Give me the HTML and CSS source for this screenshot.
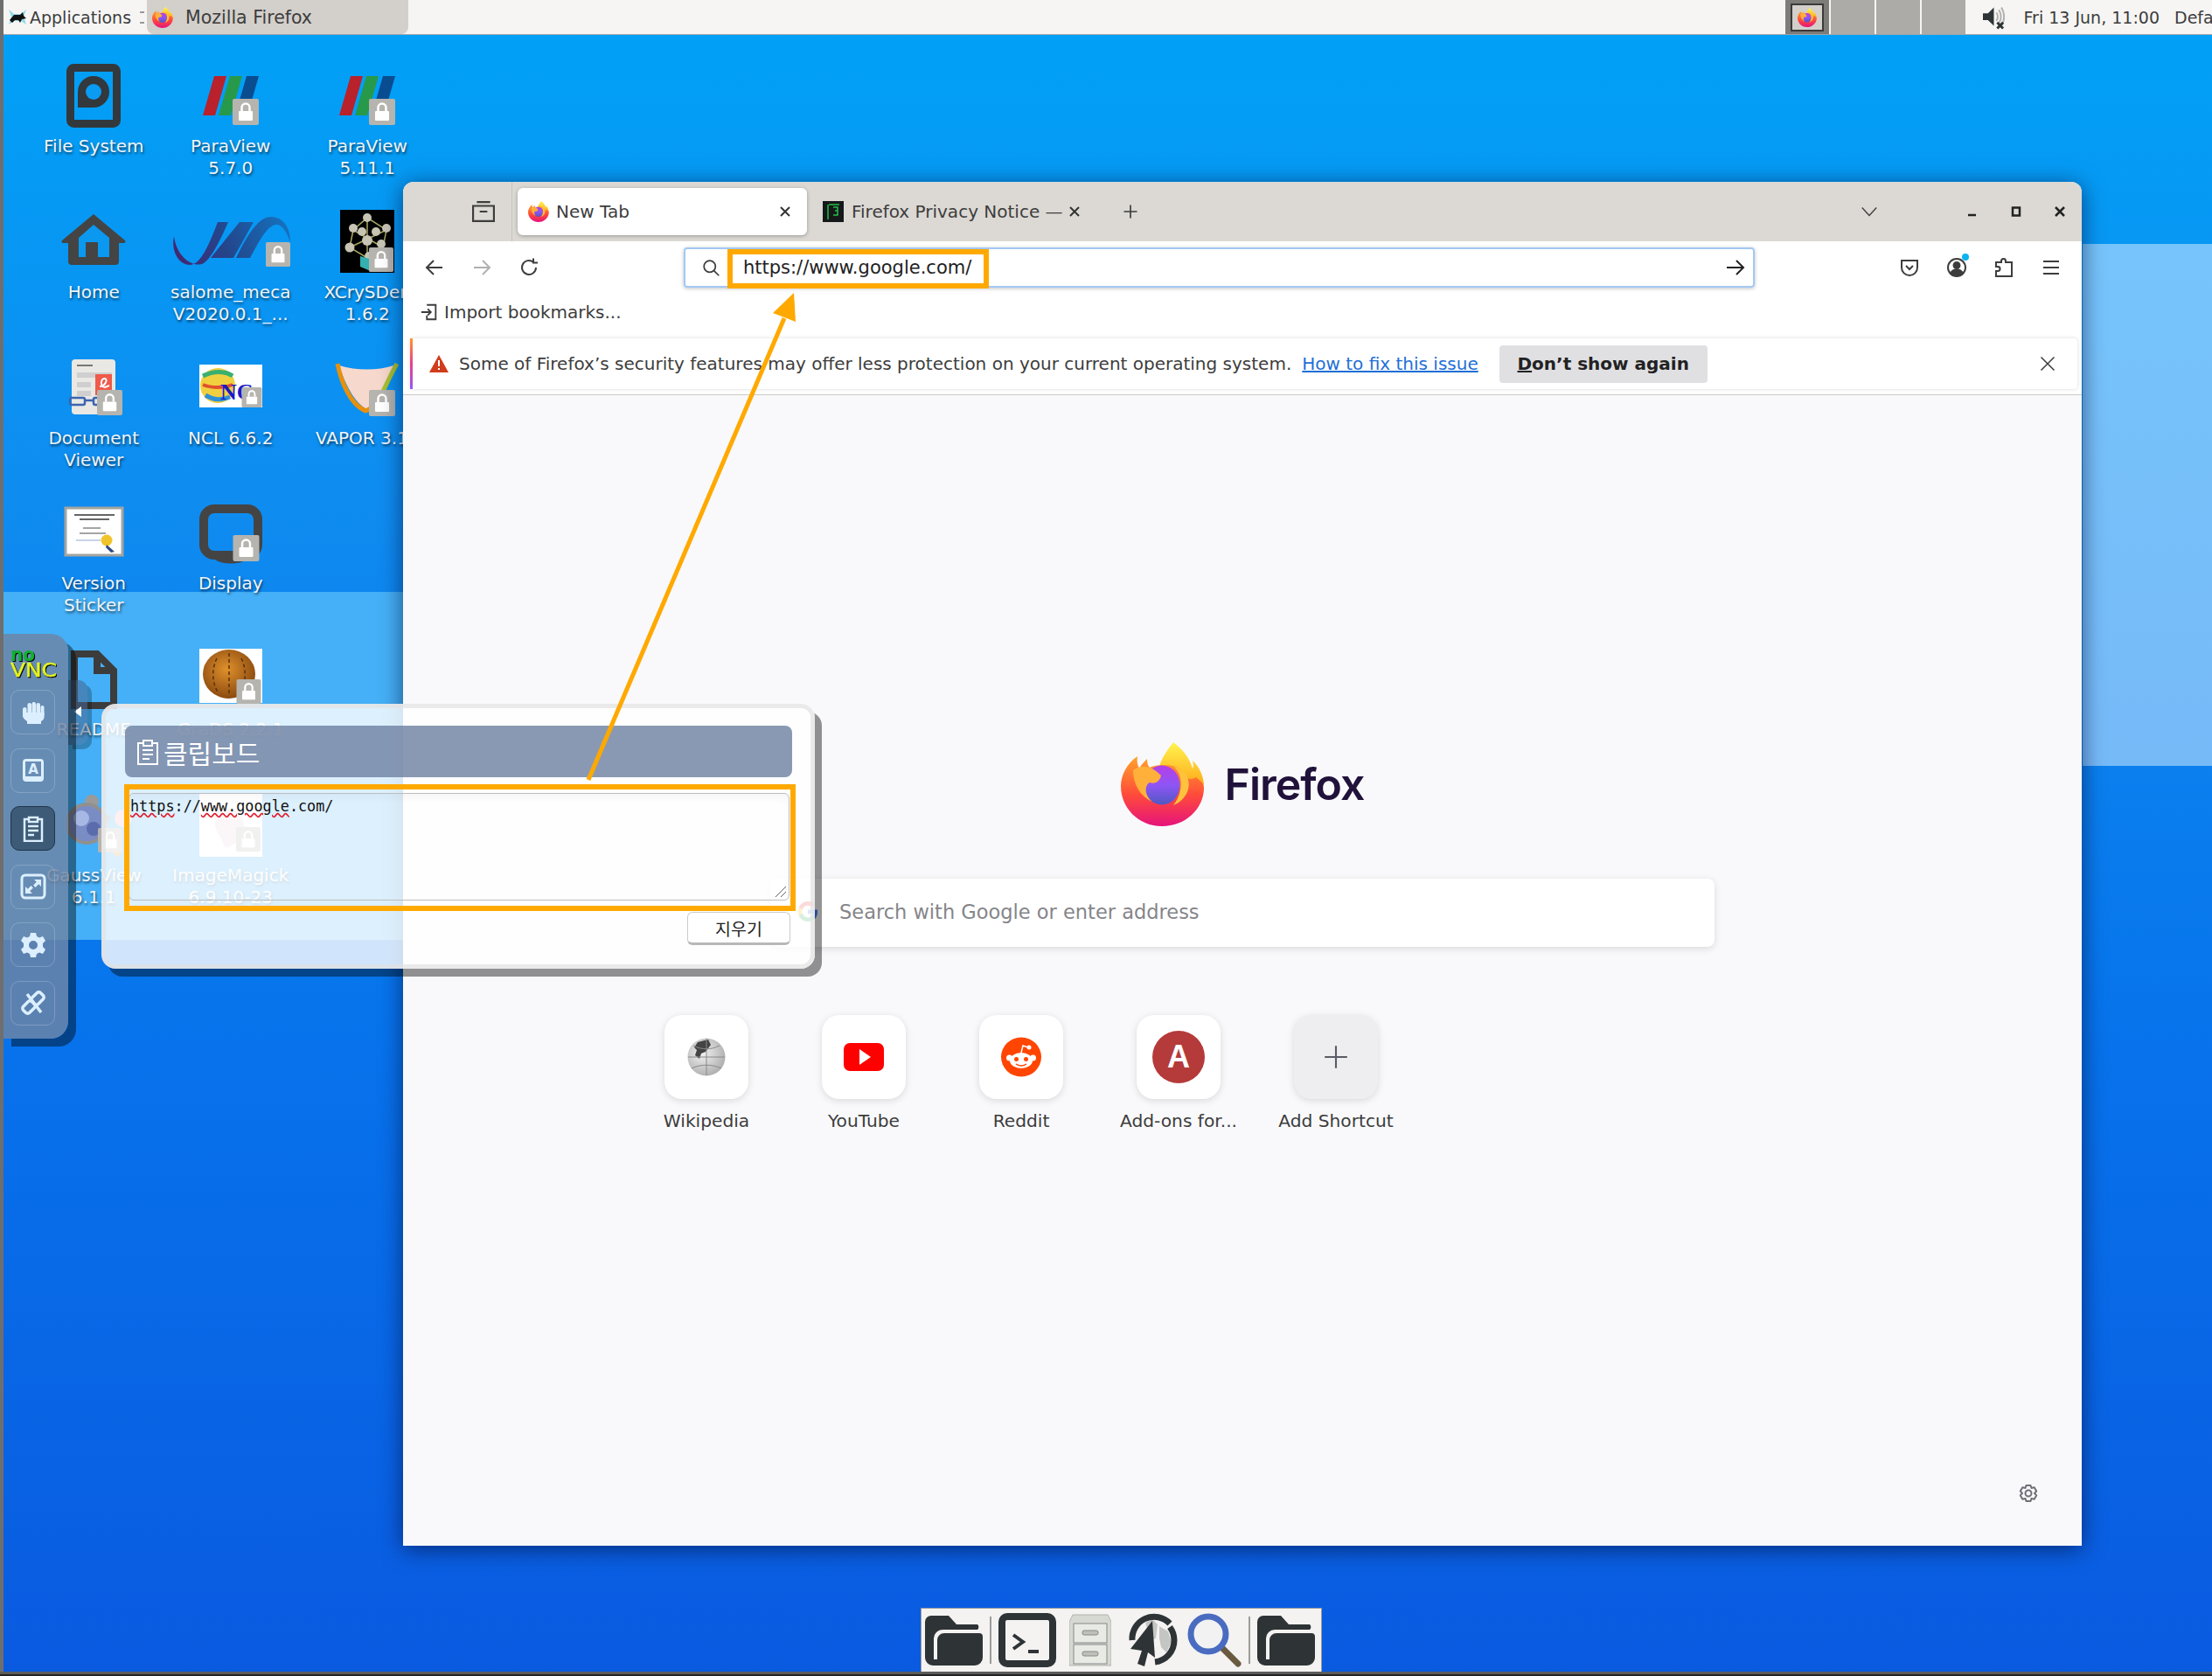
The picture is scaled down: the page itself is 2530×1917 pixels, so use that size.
FILE: index.html

```html
<!DOCTYPE html>
<html lang="en">
<head>
    <meta charset="UTF-8">
    <title>Mozilla Firefox</title>
    <link rel="stylesheet" href="styles.css">
</head>
<body>
<svg class="defs" width="0" height="0">
    <defs>
        <linearGradient id="ffBody" x1="0" y1="0" x2="0" y2="1">
            <stop offset="0" stop-color="#ffa52a"/><stop offset=".55" stop-color="#ff4b3a"/><stop offset="1" stop-color="#e5137c"/>
        </linearGradient>
        <linearGradient id="ffFlame" x1="0" y1="0" x2="0" y2="1">
            <stop offset="0" stop-color="#fff44f"/><stop offset="1" stop-color="#ff980e"/>
        </linearGradient>
        <linearGradient id="ffGlobe" x1="0" y1="0" x2="0" y2="1">
            <stop offset="0" stop-color="#b53ee6"/><stop offset=".5" stop-color="#8f55f5"/><stop offset="1" stop-color="#4f58c4"/>
        </linearGradient>
        <linearGradient id="salomeGrad" gradientUnits="userSpaceOnUse" x1="13" y1="70" x2="146" y2="20">
            <stop offset="0" stop-color="#46246e"/><stop offset=".45" stop-color="#23468c"/><stop offset="1" stop-color="#1474c0"/>
        </linearGradient>
        <radialGradient id="coinGrad" cx=".45" cy=".4" r=".6">
            <stop offset="0" stop-color="#e0912c"/><stop offset="1" stop-color="#8a4a10"/>
        </radialGradient>
        <radialGradient id="wikiGrad" cx=".4" cy=".4" r=".7">
            <stop offset="0" stop-color="#f2f2f2"/><stop offset="1" stop-color="#a8a8a8"/>
        </radialGradient>
        <symbol id="firefox" viewBox="0 0 96 96">
            <path fill="url(#ffFlame)" d="M60 0C52 10 44 22 44 30 55 27 70 33 76 50 82 60 86 62 88 60 92 56 94 50 95 48 94 38 90 28 82 21 83 26 83 28 82 30 78 16 70 8 60 0Z"/>
            <path fill="url(#ffBody)" d="M47 96C20 96 0 75 0 50 0 38 7 24 19 16 18 22 19 26 21 30 24 25 27 22 30 19 30 24 31 27 33 29 40 25 60 25 66 30 72 38 76 46 86 40 90 44 95 46 95 52 95 76 74 96 47 96Z"/>
            <ellipse cx="47" cy="49" rx="20.5" ry="22.5" fill="url(#ffGlobe)"/>
            <path fill="#ffb03a" d="M14 32C26 24 36 28 46 38 44 46 38 48 33 46 26 50 28 62 36 68 22 62 14 48 14 32Z"/>
            <path fill="#ffc23e" d="M60 28C70 34 73 56 60 72 72 68 84 52 74 36 70 32 66 29 60 28Z"/>
        </symbol>
        <symbol id="lock" viewBox="0 0 30 30">
            <rect width="30" height="30" rx="2" fill="#b6b4af"/>
            <rect x="7" y="14" width="16" height="11" rx="1" fill="#fff"/>
            <path d="M10.5 14V10a4.5 4.5 0 0 1 9 0v4" fill="none" stroke="#fff" stroke-width="2.5"/>
        </symbol>
        <symbol id="paraview" viewBox="0 0 64 45">
            <path fill="#b9212b" d="M0 45h14L27 0H13Z"/>
            <path fill="#27994a" d="M18 45h14L45 0H31Z"/>
            <path fill="#0a4c90" d="M37 45h14L64 0H50Z"/>
        </symbol>
        <symbol id="folder" viewBox="0 0 66 58">
            <path fill="#2e3436" d="M0 8a7 7 0 0 1 7-7h20l9 10h24a4 4 0 0 1 0 6H20a10 10 0 0 0-10 10v24h4V29a8 8 0 0 1 8-8h40a4 4 0 0 1 4 4v24a9 9 0 0 1-9 9H9a9 9 0 0 1-9-9Z"/>
        </symbol>
    </defs>
</svg>

<div class="screen">
    <div class="band band-left"></div>
    <div class="band band-right"></div>

    <header class="top-panel">
        <svg class="app-mouse" viewBox="0 0 24 24"><path fill="#8fd8e8" d="M2 3l6 5h8l6-5-3 8 3 9-6-4H8l-6 4 3-9Z"/><path fill="#111" d="M3 15l5-6h7l3-3 1 4 3 3-5 1-2 4-2-3H9l-3 3Z"/></svg>
        <span class="apps-label">Applications</span>
        <span class="grip"></span>
        <div class="task-btn">
            <svg class="task-icon"><use href="#firefox"/></svg>
            <span>Mozilla Firefox</span>
        </div>
        <div class="panel-spacer"></div>
        <div class="pager">
            <div class="ws ws-active"><svg class="ws-icon"><use href="#firefox"/></svg></div>
            <div class="ws"></div>
            <div class="ws"></div>
            <div class="ws"></div>
        </div>
        <svg class="vol-icon" viewBox="0 0 26 28">
            <path fill="#2e3436" d="M0 9h6l7-7v22l-7-7H0Z"/>
            <path fill="none" stroke="#b0b0b0" stroke-width="2" d="M16 8c2 3 2 7 0 10M19 5c3 5 3 11 0 16M22 2c4 7 4 15 0 22"/>
            <path stroke="#2e3436" stroke-width="3" d="M17 20l7 7M24 20l-7 7"/>
        </svg>
        <span class="clock">Fri 13 Jun, 11:00</span>
        <span class="session">Default</span>
    </header>

    <main class="desk-grid">
        <div class="desk-item">
            <svg class="desk-icon" viewBox="0 0 156 86"><rect x="51.5" y="11.5" width="53" height="64" rx="4" fill="none" stroke="#33383c" stroke-width="9"/><path fill="#33383c" d="M60 57V39a18 18 0 1 1 18 18Z"/><circle cx="78" cy="39" r="9" fill="#0a9bf2"/></svg>
            <span class="desk-label">File System</span>
        </div>
        <div class="desk-item">
            <svg class="desk-icon" viewBox="0 0 156 86"><path fill="#444" d="M78 12l36 30a2 2 0 0 1-1 3h-6v21a4 4 0 0 1-4 4H53a4 4 0 0 1-4-4V45h-6a2 2 0 0 1-1-3Z"/><path fill="#0a98f0" d="M78 24l18 15v22H61V39Z"/><rect x="69" y="44" width="14" height="20" fill="#444"/></svg>
            <span class="desk-label">Home</span>
        </div>
        <div class="desk-item">
            <svg class="desk-icon" viewBox="0 0 156 86"><rect x="53" y="11" width="50" height="63" rx="4" fill="#e9e8e4"/><path stroke="#777" stroke-width="2" d="M59 18h18"/><path stroke="#cfcfcf" stroke-width="6" d="M59 29h40M59 40h16M59 50h16"/><rect x="80" y="28" width="19" height="24" fill="#ef5a4a"/><path fill="none" stroke="#fff" stroke-width="2" d="M85 42c6 0 10-8 6-9-5-1-6 10 0 10l5-2"/><g fill="none" stroke="#3d64b0" stroke-width="2.5"><rect x="51" y="55" width="17" height="8" rx="2"/><rect x="78" y="55" width="17" height="8" rx="2"/><path d="M68 58h10"/></g><use href="#lock" x="82" y="46" width="29" height="29"/></svg>
            <span class="desk-label">Document<br>Viewer</span>
        </div>
        <div class="desk-item">
            <svg class="desk-icon" viewBox="0 0 156 86"><rect x="46" y="15" width="65" height="54" fill="#fff" stroke="#a5a5a0" stroke-width="3"/><path stroke="#666" stroke-width="2" d="M56 23h46M62 28h34"/><path stroke="#888" stroke-width="1.5" d="M66 38h20M62 44h30"/><path stroke="#8fa8d0" stroke-width="1" d="M58 52h28"/><circle cx="93" cy="52" r="6.5" fill="#f0c52c"/><path fill="#2e4a80" d="M93 57l9 8-4 1-6-6Z"/></svg>
            <span class="desk-label">Version<br>Sticker</span>
        </div>
        <div class="desk-item">
            <svg class="desk-icon" viewBox="0 0 156 86"><path fill="none" stroke="#3c3c3c" stroke-width="8" d="M56 15h26l19 19v40H56ZM82 15v19h19"/></svg>
            <span class="desk-label">README</span>
        </div>
        <div class="desk-item">
            <svg class="desk-icon" viewBox="0 0 156 86"><circle cx="76" cy="17" r="8" fill="#9a9a9a"/><path stroke="#7e7e7e" stroke-width="6" d="M80 24l16 14"/><path stroke="#d8a030" stroke-width="6" d="M86 62l22 16"/><circle cx="70" cy="42" r="22" fill="#7a8cc4" stroke="#909090" stroke-width="4"/><circle cx="64" cy="36" r="9" fill="#a8b8e4"/><circle cx="78" cy="48" r="8" fill="#5a6cac"/><circle cx="112" cy="36" r="10" fill="#f3b4b4"/><use href="#lock" x="83" y="47" width="28" height="28"/></svg>
            <span class="desk-label">GaussView<br>6.1.1</span>
        </div>

        <div class="desk-item">
            <svg class="desk-icon" viewBox="0 0 156 86"><use href="#paraview" x="46" y="21" width="64" height="45"/><use href="#lock" x="80" y="47" width="30" height="30"/></svg>
            <span class="desk-label">ParaView<br>5.7.0</span>
        </div>
        <div class="desk-item">
            <svg class="desk-icon" viewBox="0 0 156 86"><g fill="url(#salomeGrad)"><path d="M13 37C9 56 20 71 32 70 43 69 52 50 63 21H75C66 42 56 62 47 68 36 74 16 62 13 37Z"/><path d="M55 62L88 21H104L81 62Z"/><path d="M84 62C95 40 108 15 124 15 137 15 146 26 146 44 141 30 136 23 129 24 118 26 108 48 100 62Z"/></g><use href="#lock" x="118" y="44" width="28" height="28"/></svg>
            <span class="desk-label">salome_meca<br>V2020.0.1_...</span>
        </div>
        <div class="desk-item">
            <svg class="desk-icon" viewBox="0 0 156 86"><rect x="42" y="17" width="72" height="49" fill="#fff"/><circle cx="63" cy="41" r="20" fill="#f0d040"/><path fill="none" stroke="#3ab070" stroke-width="5" d="M46 30c12-6 26-6 34 0"/><path fill="none" stroke="#e0502c" stroke-width="4" d="M46 40c10 4 24 4 34 0"/><path fill="none" stroke="#2f90d8" stroke-width="5" d="M49 52c10 6 18 6 28 2"/><text class="ncl-text" x="66" y="57">NC</text><use href="#lock" x="90" y="43" width="24" height="23"/></svg>
            <span class="desk-label">NCL 6.6.2</span>
        </div>
        <div class="desk-item">
            <svg class="desk-icon" viewBox="0 0 156 86"><rect x="47" y="16" width="62" height="53" rx="12" fill="none" stroke="#444" stroke-width="10"/><path fill="#444" d="M60 74h36c-8 6-28 6-36 0Z"/><use href="#lock" x="80" y="46" width="31" height="30"/></svg>
            <span class="desk-label">Display</span>
        </div>
        <div class="desk-item">
            <svg class="desk-icon" viewBox="0 0 156 86"><rect x="42" y="9" width="72" height="62" fill="#fff"/><ellipse cx="76" cy="38" rx="30" ry="28" fill="url(#coinGrad)"/><path fill="none" stroke="#5e3008" stroke-width="1.5" stroke-dasharray="4 3" d="M62 20c-6 12-6 28 2 40M76 14v48M90 20c6 12 6 28-2 40"/><use href="#lock" x="84" y="44" width="29" height="28"/></svg>
            <span class="desk-label">GraDS 2.2.1</span>
        </div>
        <div class="desk-item">
            <svg class="desk-icon" viewBox="0 0 156 86"><rect x="42" y="8" width="72" height="72" fill="#fff"/><path fill="#e9d4da" d="M60 22l30 6 6 30-24 12-12-24Z"/><use href="#lock" x="84" y="46" width="28" height="28"/></svg>
            <span class="desk-label">ImageMagick<br>6.9.10-23</span>
        </div>

        <div class="desk-item">
            <svg class="desk-icon" viewBox="0 0 156 86"><use href="#paraview" x="46" y="21" width="64" height="45"/><use href="#lock" x="80" y="47" width="30" height="30"/></svg>
            <span class="desk-label">ParaView<br>5.11.1</span>
        </div>
        <div class="desk-item">
            <svg class="desk-icon" viewBox="0 0 156 86"><rect x="47" y="7" width="62" height="72" fill="#000"/><g fill="none" stroke="#a8a860" stroke-width="1.5"><path d="M62 30L78 16 100 30 96 50 78 62 58 50Z"/><path d="M78 16V62M62 30L96 50M100 30L58 50"/></g><g fill="#c8c4b4"><circle cx="78" cy="16" r="5"/><circle cx="62" cy="28" r="5"/><circle cx="100" cy="28" r="5"/><circle cx="72" cy="32" r="5"/><circle cx="88" cy="32" r="5"/><circle cx="78" cy="42" r="6"/><circle cx="58" cy="50" r="5.5"/><circle cx="94" cy="46" r="5"/><circle cx="80" cy="60" r="5"/></g><path fill="#35b0b0" d="M70 60l14 4v14l-14-6Z"/><use href="#lock" x="80" y="50" width="28" height="28"/></svg>
            <span class="desk-label">XCrySDen<br>1.6.2</span>
        </div>
        <div class="desk-item">
            <svg class="desk-icon" viewBox="0 0 156 86"><path fill="#f7d8cc" d="M46 18c20 6 44 6 62 0-6 18-16 40-30 50-14-6-26-30-32-50Z"/><path fill="none" stroke="#e8900c" stroke-width="5" d="M44 16c4 20 14 46 32 54 6-2 10-6 14-12"/><path fill="none" stroke="#a8c030" stroke-width="5" d="M92 56c6-12 12-26 20-40"/><use href="#lock" x="80" y="46" width="30" height="30"/></svg>
            <span class="desk-label">VAPOR 3.10</span>
        </div>
    </main>

    <section class="browser">
        <div class="tabbar">
            <div class="view-btn">
                <svg class="ico view-ico" viewBox="0 0 24 24"><path d="M5 2h14M1 6h22v16H1ZM8 12h8"/></svg>
            </div>
            <div class="tab tab-active">
                <svg class="favicon"><use href="#firefox"/></svg>
                <span class="tab-title">New Tab</span>
                <svg class="tab-x" viewBox="0 0 14 14"><path d="M2 2l10 10M12 2L2 12"/></svg>
            </div>
            <div class="tab">
                <svg class="favicon" viewBox="0 0 24 24"><rect width="24" height="24" fill="#16181a"/><path fill="none" stroke="#22c04a" stroke-width="1.5" d="M6 4v17M7 4h12M12 7h5v4h-3 3v5h-5"/></svg>
                <span class="tab-title tab-title-fade">Firefox Privacy Notice —</span>
                <svg class="tab-x" viewBox="0 0 14 14"><path d="M2 2l10 10M12 2L2 12"/></svg>
            </div>
            <svg class="ico new-tab" viewBox="0 0 24 24"><path d="M12 3v18M3 12h18"/></svg>
            <div class="panel-spacer"></div>
            <svg class="ico chevron" viewBox="0 0 24 24"><path d="M3 7l9 10 9-10"/></svg>
            <div class="win-ctrl">
                <svg class="ctrl" viewBox="0 0 14 14"><path d="M2 11h9"/></svg>
                <svg class="ctrl" viewBox="0 0 14 14"><path d="M3 2.5h8v9H3Z"/></svg>
                <svg class="ctrl" viewBox="0 0 14 14"><path d="M2 2l10 10M12 2L2 12"/></svg>
            </div>
        </div>

        <div class="navbar">
            <svg class="ico nav-btn" viewBox="0 0 24 24"><path d="M21 12H3M11 4l-8 8 8 8"/></svg>
            <svg class="ico nav-btn nav-off" viewBox="0 0 24 24"><path d="M3 12h18M13 4l8 8-8 8"/></svg>
            <svg class="ico nav-btn" viewBox="0 0 24 24"><path d="M20 12a8 8 0 1 1-3-6.3M17 1.500v5h5"/></svg>
            <div class="urlbar">
                <svg class="ico url-search" viewBox="0 0 24 24"><circle cx="10" cy="10" r="7.5"/><path d="M15.500 15.500L22 22"/></svg>
                <span class="url-text">https://www.google.com/</span>
                <svg class="ico url-go" viewBox="0 0 24 24"><path d="M2 12h19M13 4l8 8-8 8"/></svg>
            </div>
            <div class="nav-tools">
                <svg class="ico" viewBox="0 0 24 24"><path d="M3 4h18v8a9 9 0 0 1-18 0ZM8 10l4 4 4-4"/></svg>
                <span class="account">
                    <svg class="ico" viewBox="0 0 24 24"><circle cx="12" cy="12" r="10"/><circle cx="12" cy="9.5" r="3.5" fill="#3d3d3d"/><path fill="#3d3d3d" d="M5 19c2-6 12-6 14 0-4 3-10 3-14 0Z"/></svg>
                    <i class="account-dot"></i>
                </span>
                <svg class="ico" viewBox="0 0 24 24"><path d="M9 22H3v-6h2a2.5 2.5 0 0 0 0-5H3V6h6V4.500a2.500 2.500 0 0 1 5 0V6h7v16Z"/></svg>
                <svg class="ico" viewBox="0 0 24 24"><path d="M3 5h18M3 12h18M3 19h18"/></svg>
            </div>
        </div>

        <div class="bookmarks">
            <svg class="ico import-ico" viewBox="0 0 24 24"><path d="M9 3h11v18H9v-5M2 12h12M10 8l4 4-4 4"/></svg>
            <span>Import bookmarks...</span>
        </div>

        <div class="notice-wrap">
            <div class="notice">
                <svg class="notice-warn" viewBox="0 0 22 20"><path fill="#d03c1c" d="M11 0l11 20H0Z"/><path stroke="#fff" stroke-width="2" d="M11 6v7M11 15v2"/></svg>
                <span class="notice-text">Some of Firefox’s security features may offer less protection on your current operating system.</span>
                <a class="notice-link">How to fix this issue</a>
                <button class="notice-btn"><u>D</u>on’t show again</button>
                <svg class="ico notice-x" viewBox="0 0 24 24"><path d="M3 3l18 18M21 3L3 21"/></svg>
            </div>
        </div>

        <div class="page">
            <div class="brand">
                <svg class="brand-logo"><use href="#firefox"/></svg>
                <span class="brand-name">Firefox</span>
            </div>
            <div class="search-box">
                <svg class="g-icon" viewBox="0 0 24 24">
                    <path fill="#4285f4" d="M23 12c0-1-.1-1.700-.2-2.500H12v4.700h6.200c-.3 1.400-1 2.600-2.200 3.400v3h3.700C22 18.500 23 15.500 23 12Z"/>
                    <path fill="#34a853" d="M12 23c3 0 5.500-1 7.700-2.700l-3.700-3c-1 .7-2.400 1.100-4 1.100-3 0-5.500-2-6.400-4.800H1.800v3C3.700 20.500 7.500 23 12 23Z"/>
                    <path fill="#fbbc05" d="M5.600 13.600c-.5-1.400-.5-2.800 0-4.200v-3H1.800c-1.600 3.200-1.600 7 0 10.200Z"/>
                    <path fill="#ea4335" d="M12 4.800c1.700 0 3.200.6 4.400 1.700l3.300-3.300C17.700 1.200 15 0 12 0 7.500 0 3.700 2.500 1.800 6.400l3.800 3C6.500 6.800 9 4.800 12 4.800Z"/>
                </svg>
                <span class="search-hint">Search with Google or enter address</span>
            </div>
            <div class="shortcuts">
                <div class="shortcut">
                    <div class="tile"><svg class="tile-icon" viewBox="0 0 46 46"><circle cx="23" cy="23" r="21.5" fill="url(#wikiGrad)"/><path fill="#444" d="M13 6l12-3 3 6-6 8-5 2-2 6-5-4 2-6-3-3Z"/><path fill="none" stroke="#8a8a8a" d="M23 2v42M2 23h42M8 10c10 5 20 5 30 0M6 36c10-5 24-5 34 0"/></svg></div>
                    <span class="shortcut-name">Wikipedia</span>
                </div>
                <div class="shortcut">
                    <div class="tile"><svg class="tile-icon" viewBox="0 0 46 46"><rect y="7" width="46" height="32" rx="7" fill="#f00"/><path fill="#fff" d="M18 14l13 9-13 9Z"/></svg></div>
                    <span class="shortcut-name">YouTube</span>
                </div>
                <div class="shortcut">
                    <div class="tile"><svg class="tile-icon" viewBox="0 0 46 46"><ellipse cx="23" cy="23" rx="23" ry="22.5" fill="#ff4500"/><ellipse cx="23" cy="27" rx="13" ry="9" fill="#fff"/><circle cx="9.5" cy="24" r="3.5" fill="#fff"/><circle cx="36.5" cy="24" r="3.5" fill="#fff"/><circle cx="17.5" cy="25.5" r="2.5" fill="#ff4500"/><circle cx="28.5" cy="25.5" r="2.5" fill="#ff4500"/><path fill="none" stroke="#ff4500" stroke-width="1.5" d="M17 31c3 2.5 9 2.5 12 0"/><path fill="none" stroke="#fff" stroke-width="1.5" d="M23 18l2-8 6 2"/><circle cx="32" cy="12" r="2.5" fill="#fff"/></svg></div>
                    <span class="shortcut-name">Reddit</span>
                </div>
                <div class="shortcut">
                    <div class="tile"><span class="addon-mark">A</span></div>
                    <span class="shortcut-name">Add-ons for...</span>
                </div>
                <div class="shortcut">
                    <div class="tile tile-add"><svg class="add-icon" viewBox="0 0 24 24"><path d="M12 1v22M1 12h22"/></svg></div>
                    <span class="shortcut-name">Add Shortcut</span>
                </div>
            </div>
            <svg class="page-gear" viewBox="0 0 24 22"><path d="M9.5 2h5l1 3 3.200-.7 2.500 4.300-2.200 2.400 2.200 2.400-2.500 4.300-3.200-.7-1 3h-5l-1-3-3.200.7-2.500-4.300L5 11 2.800 8.600l2.500-4.300 3.200.7Z"/><circle cx="12" cy="11" r="3.500"/></svg>
        </div>
    </section>

    <aside class="nv-handle"><i class="nv-arrow"></i></aside>
    <aside class="nv-bar">
        <svg class="nv-logo" viewBox="0 0 56 36">
            <text class="nv-no" x="0" y="14" textLength="28" lengthAdjust="spacingAndGlyphs">no</text>
            <text class="nv-vnc" x="0" y="32" textLength="53" lengthAdjust="spacingAndGlyphs">VNC</text>
        </svg>
        <div class="nv-btn"><svg viewBox="0 0 30 30"><rect x="3" y="9" width="4.5" height="12" rx="2.2"/><rect x="8.500" y="4" width="4.500" height="14" rx="2.200"/><rect x="13.500" y="3" width="4.500" height="14" rx="2.200"/><rect x="18.500" y="4" width="4.500" height="14" rx="2.200"/><rect x="23.500" y="7" width="4" height="13" rx="2"/><path d="M3 15h24.500v5c0 3-2 4-3.500 5v3H8v-3c-3-2-5-4-5-7Z"/></svg></div>
        <div class="nv-btn"><svg viewBox="0 0 30 30"><rect x="3" y="2" width="24" height="26" rx="4"/><path class="nv-cut" d="M6 5h18v17H6Z"/><text class="nv-key" x="15" y="19">A</text></svg></div>
        <div class="nv-btn nv-btn-on"><svg viewBox="0 0 30 30"><path class="nv-line" d="M9 4H5v25h20V4h-4M10 2h10v5H10ZM9 12h12M9 17h12M9 22h7"/></svg></div>
        <div class="nv-btn"><svg viewBox="0 0 30 30"><rect class="nv-line nv-mid" x="2" y="2" width="26" height="26" rx="4"/><path d="M16 7h8v8l-2.800-2.800-3.700 3.700-2.400-2.400 3.700-3.700ZM14 23H6v-8l2.800 2.800 3.700-3.700 2.400 2.400-3.700 3.700Z"/></svg></div>
        <div class="nv-btn"><svg viewBox="0 0 30 30"><path fill-rule="evenodd" d="M12 1h6l1 4 3 1.500L26 5l3 5-3 3v4l3 3-3 5-4-1.500-3 1.500-1 4h-6l-1-4-3-1.500L4 25l-3-5 3-3v-4l-3-3 3-5 4 1.500L11 5Zm3 9a5 5 0 1 0 0 10 5 5 0 0 0 0-10Z"/></svg></div>
        <div class="nv-btn"><svg viewBox="0 0 30 30"><g class="nv-line nv-thick" transform="rotate(-45 15 15)"><rect x="1" y="10" width="14" height="10" rx="3"/><rect x="15" y="10" width="14" height="10" rx="3"/></g><path class="nv-line nv-thick" d="M8 5l16 21"/></svg></div>
    </aside>

    <section class="clip-panel">
        <div class="clip-head">
            <svg class="clip-icon" viewBox="0 0 30 30"><path d="M9 5H4v24h22V5h-5M10 2h10v6H10ZM9 13h12M9 18h12M9 23h8"/></svg>
            <span>클립보드</span>
        </div>
        <div class="clip-area">
            <span class="misspelt">https</span>://<span class="misspelt">www.google</span>.com/
            <svg class="clip-grip" viewBox="0 0 14 14"><path d="M1 13L13 1M7 13l6-6"/></svg>
        </div>
        <div class="clip-foot"><button class="clip-clear">지우기</button></div>
    </section>

    <div class="mark mark-url"></div>
    <div class="mark mark-area"></div>
    <svg class="arrow-layer" viewBox="0 0 2530 1917">
        <path class="arrow-line" d="M673 892L897 364"/>
        <path class="arrow-head" d="M908 335L884 358 910 368Z"/>
    </svg>

    <nav class="dock">
        <svg class="dock-folder"><use href="#folder"/></svg>
        <span class="dock-sep"></span>
        <svg class="dock-term" viewBox="0 0 66 62"><rect x="4" y="4" width="58" height="54" rx="6" fill="none" stroke="#2e3436" stroke-width="8"/><path fill="none" stroke="#2e3436" stroke-width="4" d="M17 25l11 8-11 8M34 44h12"/></svg>
        <svg class="dock-cab" viewBox="0 0 48 62"><path fill="#d6d8d2" stroke="#b0b2ac" d="M4 2h40l4 8v50H0V10Z"/><rect x="5" y="12" width="38" height="22" fill="#e8eae4" stroke="#888"/><rect x="5" y="36" width="38" height="22" fill="#e8eae4" stroke="#888"/><rect x="15" y="20" width="18" height="5" rx="2" fill="#c0c0ba" stroke="#888"/><rect x="15" y="44" width="18" height="5" rx="2" fill="#c0c0ba" stroke="#888"/></svg>
        <svg class="dock-globe" viewBox="0 0 60 64"><path fill="#c4c6c4" d="M22 12l8-4 6 6-2 16-6 2Zm16 4l10 6 4 12-6 12-6-6-2-10Z"/><path fill="none" stroke="#2e3436" stroke-width="7" d="M7 32A25 25 0 0 1 50 13M33 57a25 25 0 0 0 22-25c0-6-2-11-5-15"/><path fill="#2e3436" d="M30 10l3 42-8-6-4 16-8-3 5-15-13-2Z"/></svg>
        <svg class="dock-lens" viewBox="0 0 62 62"><path stroke="#6a5a40" stroke-width="7" stroke-linecap="round" d="M40 40l18 18"/><circle cx="24" cy="24" r="20" fill="#f2f2f2" stroke="#4a6cc0" stroke-width="7"/></svg>
        <span class="dock-sep"></span>
        <svg class="dock-folder"><use href="#folder"/></svg>
    </nav>

    <div class="edge-left"></div>
    <div class="edge-bottom"></div>
</div>
</body>
</html>
```

FILE: styles.css

```css
* {
    box-sizing: border-box;
}
html, body {
    margin: 0;
    padding: 0;
}
.defs {
    position: absolute;
}
.screen {
    position: relative;
    width: 2530px;
    height: 1917px;
    overflow: hidden;
    font-family: "DejaVu Sans", sans-serif;
    color: #3d3d3d;
    background: linear-gradient(#00a2f7 0%, #0f8cf0 30%, #0774ec 60%, #0a5ae0 100%);
}

/* wallpaper */
.band {
    position: absolute;
}
.band-left {
    left: 0;
    top: 677px;
    width: 470px;
    height: 398px;
    background: #45b0f7;
}
.band-right {
    left: 2382px;
    top: 279px;
    width: 148px;
    height: 597px;
    background: linear-gradient(#76c4fb, #76baf8);
}

/* top panel */
.top-panel {
    position: relative;
    display: flex;
    align-items: center;
    height: 40px;
    padding-left: 8px;
    background: #f6f5f4;
    border-bottom: 1px solid #9aa5ad;
    font-size: 19px;
}
.app-mouse {
    width: 24px;
    height: 24px;
    margin-right: 2px;
}
.apps-label {
    width: 126px;
}
.grip {
    width: 5px;
    height: 14px;
    border-top: 2px solid #999;
    border-bottom: 2px solid #999;
    margin-right: 3px;
}
.task-btn {
    display: flex;
    align-items: center;
    width: 299px;
    height: 39px;
    padding-left: 6px;
    gap: 14px;
    background: #d3cfcb;
    border-radius: 0 0 8px 8px;
    font-size: 20.5px;
}
.task-icon {
    width: 24px;
    height: 26px;
}
.panel-spacer {
    flex: 1;
}
.pager {
    display: flex;
    height: 39px;
    gap: 2px;
}
.ws {
    width: 50px;
    background: #acaba7;
}
.ws-active {
    display: flex;
    align-items: center;
    justify-content: center;
    background: #7d7c78;
}
.ws-icon {
    width: 38px;
    height: 32px;
    padding: 3px 6px;
    background: #d3cfcb;
    border: 2px solid #3a3a3a;
}
.vol-icon {
    width: 25px;
    height: 28px;
    margin-left: 20px;
}
.clock {
    margin-left: 22px;
    white-space: nowrap;
}
.session {
    margin-left: 17px;
    width: 43px;
    overflow: hidden;
}

/* desktop icons */
.desk-grid {
    position: relative;
    display: grid;
    grid-auto-flow: column;
    grid-template-columns: repeat(3, 156.5px);
    grid-template-rows: repeat(6, 166.8px);
    padding: 26px 0 0 29px;
}
.desk-item {
    display: flex;
    flex-direction: column;
    align-items: center;
}
.desk-icon {
    width: 156px;
    height: 86px;
    flex: none;
}
.desk-label {
    margin-top: 3px;
    font-size: 20px;
    line-height: 25px;
    text-align: center;
    white-space: nowrap;
    color: #f0f4f8;
    text-shadow: 1px 2px 3px rgba(0, 0, 0, .6);
}
.ncl-text {
    font: bold 26px "Liberation Serif", serif;
    fill: #1a1ac8;
}

/* firefox window */
.browser {
    position: absolute;
    left: 461px;
    top: 208px;
    width: 1920px;
    height: 1560px;
    display: flex;
    flex-direction: column;
    background: #fff;
    border-radius: 12px 12px 0 0;
    box-shadow: 0 4px 26px rgba(0, 10, 50, .6);
}
.ico {
    width: 24px;
    height: 24px;
    fill: none;
    stroke: #3d3d3d;
    stroke-width: 2;
    flex: none;
}
.tabbar {
    display: flex;
    align-items: center;
    height: 68px;
    flex: none;
    background: #dcd9d4;
    border-radius: 12px 12px 0 0;
    font-size: 20px;
}
.view-btn {
    display: flex;
    align-items: center;
    justify-content: flex-end;
    width: 125px;
    height: 68px;
    padding-right: 19px;
    border-right: 1px solid #c8c5c0;
}
.view-ico {
    width: 26px;
    height: 26px;
}
.tab {
    display: flex;
    align-items: center;
    width: 331px;
    height: 54px;
    padding: 0 18px;
    flex: none;
    white-space: nowrap;
    overflow: hidden;
}
.tab-active {
    margin-left: 6px;
    padding: 0 18px 0 12px;
    background: #fff;
    border-radius: 6px;
    box-shadow: 0 1px 4px rgba(0, 0, 0, .3);
}
.favicon {
    width: 24px;
    height: 24px;
    flex: none;
}
.tab-title {
    flex: 1;
    margin-left: 8px;
}
.tab-title-fade {
    overflow: hidden;
    margin-left: 9px;
}
.tab-x {
    width: 14px;
    height: 14px;
    flex: none;
    fill: none;
    stroke: #333;
    stroke-width: 2;
}
.new-tab {
    width: 20px;
    height: 20px;
    margin-left: 29px;
}
.chevron {
    width: 22px;
    height: 22px;
    stroke-width: 1.5;
}
.win-ctrl {
    display: flex;
    align-items: center;
    gap: 36px;
    margin-left: 100px;
    margin-right: 18px;
}
.ctrl {
    width: 14px;
    height: 14px;
    fill: none;
    stroke: #222;
    stroke-width: 2.5;
}
.navbar {
    display: flex;
    align-items: center;
    height: 60px;
    flex: none;
    padding-left: 24px;
    gap: 30px;
}
.nav-off {
    opacity: .4;
}
.urlbar {
    display: flex;
    align-items: center;
    width: 1225px;
    height: 46px;
    margin-left: 135px;
    padding: 0 8px 0 19px;
    border: 2px solid #a3c8f3;
    border-radius: 4px;
    box-shadow: 0 1px 4px rgba(0, 0, 0, .25);
    font-size: 21px;
    color: #222;
}
.url-search {
    width: 21px;
    height: 21px;
}
.url-text {
    flex: 1;
    margin-left: 26px;
}
.url-go {
    stroke: #222;
}
.nav-tools {
    display: flex;
    align-items: center;
    gap: 30px;
    margin-left: 135px;
}
.account {
    position: relative;
    display: flex;
}
.account-dot {
    position: absolute;
    right: -2px;
    top: -4px;
    width: 8px;
    height: 8px;
    border-radius: 50%;
    background: #0bb3f0;
}
.bookmarks {
    display: flex;
    align-items: center;
    height: 47px;
    flex: none;
    padding: 0 0 5px 19px;
    gap: 6px;
    font-size: 20px;
}
.import-ico {
    width: 22px;
    height: 22px;
}
.notice-wrap {
    flex: none;
    height: 69px;
    padding: 4px 5px 7px 8px;
    border-bottom: 1px solid #ccc9c4;
}
.notice {
    display: flex;
    align-items: center;
    height: 58px;
    padding-left: 19px;
    font-size: 20px;
    background: #fff;
    border-radius: 4px;
    border-left: 3px solid;
    border-image: linear-gradient(#ff9a2a, #e83e8c, #9059ff) 1;
    box-shadow: 0 0 4px rgba(0, 0, 0, .15);
}
.notice-warn {
    width: 22px;
    height: 20px;
    flex: none;
}
.notice-text {
    margin-left: 12px;
    white-space: nowrap;
}
.notice-link {
    margin-left: 12px;
    color: #1f6fd6;
    text-decoration: underline;
    white-space: nowrap;
}
.notice-btn {
    width: 238px;
    height: 43px;
    margin-left: 24px;
    border: 0;
    border-radius: 4px;
    background: #e0e0e3;
    color: #222;
    font: bold 20px "DejaVu Sans", sans-serif;
}
.notice-x {
    width: 20px;
    height: 20px;
    margin-left: auto;
    margin-right: 24px;
    stroke-width: 1.8;
}

/* new tab page */
.page {
    position: relative;
    flex: 1;
    display: flex;
    flex-direction: column;
    align-items: center;
    background: #f9f9fb;
}
.brand {
    display: flex;
    align-items: center;
    height: 96px;
    margin-top: 397px;
    gap: 23px;
}
.brand-logo {
    width: 96px;
    height: 96px;
}
.brand-name {
    font: 600 50px "Inter", sans-serif;
    color: #20123a;
    letter-spacing: -1px;
}
.search-box {
    display: flex;
    align-items: center;
    width: 1080px;
    height: 78px;
    margin-top: 60px;
    padding: 0 0 2px 31px;
    background: #fff;
    border-radius: 8px;
    box-shadow: 0 2px 8px rgba(0, 0, 0, .13);
}
.g-icon {
    width: 24px;
    height: 24px;
}
.search-hint {
    margin-left: 24px;
    font-size: 22.5px;
    color: #85858a;
}
.shortcuts {
    display: flex;
    width: 1406px;
    margin-top: 78px;
}
.shortcut {
    display: flex;
    flex-direction: column;
    align-items: center;
    width: 180px;
}
.tile {
    display: flex;
    align-items: center;
    justify-content: center;
    width: 96px;
    height: 96px;
    background: #fff;
    border-radius: 20px;
    box-shadow: 0 2px 8px rgba(0, 0, 0, .13);
}
.tile-add {
    background: #eeeef1;
}
.tile-icon {
    width: 46px;
    height: 46px;
}
.addon-mark {
    display: flex;
    align-items: center;
    justify-content: center;
    width: 60px;
    height: 60px;
    border-radius: 50%;
    background: #b53a3a;
    color: #fff;
    font: bold 36px "Liberation Sans", sans-serif;
}
.add-icon {
    width: 28px;
    height: 28px;
    fill: none;
    stroke: #5b5b66;
    stroke-width: 1.8;
}
.shortcut-name {
    margin-top: 13px;
    font-size: 20.2px;
    line-height: 24px;
    white-space: nowrap;
}
.page-gear {
    position: absolute;
    right: 49px;
    bottom: 48px;
    width: 24px;
    height: 24px;
    fill: none;
    stroke: #6f6f76;
    stroke-width: 2;
    stroke-linejoin: round;
}

/* noVNC sidebar */
.nv-bar {
    position: absolute;
    left: 4px;
    top: 725px;
    width: 74px;
    height: 463px;
    padding: 17px 0 0 8px;
    display: flex;
    flex-direction: column;
    background: rgba(110, 132, 163, .82);
    border-radius: 0 20px 20px 0;
    box-shadow: 9px 9px 0 rgba(0, 0, 0, .42);
}
.nv-logo {
    width: 56px;
    height: 36px;
    margin-bottom: 11px;
    flex: none;
    overflow: visible;
    font-family: "DejaVu Sans", sans-serif;
    filter: drop-shadow(1px 1px 0 #000);
}
.nv-no {
    font-size: 21px;
    font-weight: bold;
    fill: #10b030;
}
.nv-vnc {
    font-size: 22px;
    font-weight: normal;
    fill: #e4f520;
    stroke: #e4f520;
    stroke-width: .5;
}
.nv-btn {
    display: flex;
    align-items: center;
    justify-content: center;
    flex: none;
    width: 51px;
    height: 51px;
    margin-bottom: 15.5px;
    border: 1px solid rgba(255, 255, 255, .2);
    border-radius: 10px;
}
.nv-btn svg {
    width: 30px;
    height: 30px;
    fill: #dcefff;
}
.nv-btn-on {
    background: #3d5a77;
    border-color: #22364a;
}
.nv-btn svg .nv-line {
    fill: none;
    stroke: #dcefff;
    stroke-width: 2.5;
}
.nv-btn svg .nv-mid {
    stroke-width: 3;
}
.nv-btn svg .nv-thick {
    stroke-width: 3.5;
}
.nv-btn svg .nv-cut {
    fill: #6a8db4;
}
.nv-btn svg .nv-key {
    font: bold 15px "DejaVu Sans", sans-serif;
    text-anchor: middle;
    fill: #dcefff;
}
.nv-handle {
    position: absolute;
    left: 78px;
    top: 778px;
    width: 22px;
    height: 74px;
    background: rgba(70, 100, 140, .55);
    border-radius: 0 10px 10px 0;
    box-shadow: 5px 5px 0 rgba(0, 0, 0, .25);
}
.nv-arrow {
    position: absolute;
    left: 7px;
    top: 30px;
    border: 6px solid transparent;
    border-right: 8px solid #fff;
    border-left: 0;
}

/* clipboard panel */
.clip-panel {
    position: absolute;
    left: 116px;
    top: 805px;
    width: 816px;
    height: 303px;
    padding: 20px 21px 0 22px;
    background: rgba(255, 255, 255, .81);
    border: 5px solid rgba(225, 225, 225, .7);
    border-radius: 16px;
    box-shadow: 8px 9px 0 rgba(0, 0, 0, .42);
}
.clip-head {
    display: flex;
    align-items: center;
    height: 59px;
    padding-left: 11px;
    gap: 3px;
    background: rgba(109, 128, 160, .8);
    border-radius: 8px;
    color: #fff;
    font: 30px "Noto Sans CJK KR", sans-serif;
}
.clip-icon {
    width: 30px;
    height: 30px;
    fill: none;
    stroke: #fff;
    stroke-width: 2;
}
.clip-area {
    position: relative;
    height: 123px;
    margin: 18px 3px 0 4px;
    padding: 4px 1px;
    border: 1px solid #bdbdbd;
    border-radius: 6px;
    box-shadow: inset 0 6px 8px rgba(0, 0, 0, .03);
    font: 16.8px/20px "DejaVu Sans Mono", monospace;
    color: #111;
}
.misspelt {
    text-decoration: underline wavy #e02030;
}
.clip-grip {
    position: absolute;
    right: 2px;
    bottom: 2px;
    width: 14px;
    height: 14px;
    fill: none;
    stroke: #666;
}
.clip-foot {
    display: flex;
    justify-content: flex-end;
    margin-top: 13px;
    padding-right: 2px;
}
.clip-clear {
    width: 118px;
    height: 38px;
    background: #fff;
    border: 1px solid #ccc;
    border-bottom: 3px solid #b8b8b8;
    border-radius: 6px;
    color: #222;
    font: 19.5px "Noto Sans CJK KR", sans-serif;
}

/* orange annotation */
.mark {
    position: absolute;
    border: 6px solid #ffa900;
}
.mark-url {
    left: 832px;
    top: 285px;
    width: 299px;
    height: 45px;
}
.mark-area {
    left: 142px;
    top: 897px;
    width: 768px;
    height: 145px;
}
.arrow-layer {
    position: absolute;
    left: 0;
    top: 0;
    width: 2530px;
    height: 1917px;
    pointer-events: none;
}
.arrow-line {
    fill: none;
    stroke: #ffa900;
    stroke-width: 5;
}
.arrow-head {
    fill: #ffa900;
}

/* dock */
.dock {
    position: absolute;
    left: 1053px;
    top: 1839px;
    width: 459px;
    height: 73px;
    display: flex;
    align-items: center;
    padding: 0 4px;
    background: #f4f3f2;
    border: 1px solid #9a9a9a;
    border-bottom: 0;
}
.dock-folder {
    width: 66px;
    height: 58px;
    flex: none;
}
.dock-sep {
    width: 2px;
    height: 54px;
    margin: 0 8px;
    background: #9c9c9c;
}
.dock-term {
    width: 66px;
    height: 62px;
}
.dock-cab {
    width: 48px;
    height: 62px;
    margin-left: 15px;
}
.dock-globe {
    width: 60px;
    height: 64px;
    margin-left: 17px;
}
.dock-lens {
    width: 62px;
    height: 62px;
    margin-left: 10px;
}
.edge-left {
    position: absolute;
    left: 0;
    top: 0;
    width: 4px;
    height: 1917px;
    background: #6e6e6e;
}
.edge-bottom {
    position: absolute;
    left: 0;
    top: 1912px;
    width: 2530px;
    height: 5px;
    background: linear-gradient(#5c5c5c 50%, #222 50%);
}
```
